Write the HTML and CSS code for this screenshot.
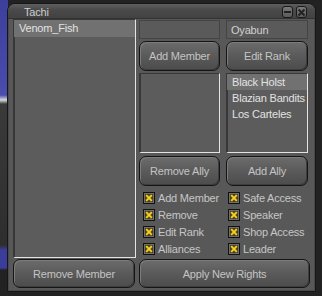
FILE: index.html
```html
<html lang="en">
  <head>
    <title>Tachi</title>
    <meta charset="utf-8">
    <meta name="viewport" content="width=device-width, initial-scale=1.0">
    <link rel="stylesheet" href="styles.css">
  </head>
  <body>
    <div class="scene">
      <div class="window">
        <div class="titlebar">
          <span class="title">Tachi</span>
          <div class="winbtns">
            <span class="winbtn">
              <svg width="11" height="12" viewBox="0 0 11 12"><rect x="2" y="5" width="7" height="2" fill="#222"/></svg>
            </span>
            <span class="winbtn">
              <svg width="11" height="12" viewBox="0 0 11 12"><path d="M2.5 3.5 L8.5 9.5 M8.5 3.5 L2.5 9.5" stroke="#222" stroke-width="2"/></svg>
            </span>
          </div>
        </div>

        <div class="content">
          <div class="main">
            <ul class="list list--members">
              <li class="item item--active">Venom_Fish</li>
            </ul>

            <div class="side">
              <div class="field"></div>
              <div class="field">Oyabun</div>

              <button class="btn">Add Member</button>
              <button class="btn">Edit Rank</button>

              <ul class="list list--small"></ul>
              <ul class="list list--small">
                <li class="item item--active">Black Holst</li>
                <li class="item">Blazian Bandits</li>
                <li class="item">Los Carteles</li>
              </ul>

              <button class="btn btn--low">Remove Ally</button>
              <button class="btn btn--low">Add Ally</button>

              <ul class="rights">
                <li class="right"><span class="check"></span>Add Member</li>
                <li class="right"><span class="check"></span>Safe Access</li>
                <li class="right"><span class="check"></span>Remove</li>
                <li class="right"><span class="check"></span>Speaker</li>
                <li class="right"><span class="check"></span>Edit Rank</li>
                <li class="right"><span class="check"></span>Shop Access</li>
                <li class="right"><span class="check"></span>Alliances</li>
                <li class="right"><span class="check"></span>Leader</li>
              </ul>
            </div>
          </div>

          <div class="actions">
            <button class="btn btn--remove">Remove Member</button>
            <button class="btn btn--apply">Apply New Rights</button>
          </div>
        </div>
      </div>
    </div>

    <script>
      // same tick box for every right
      const box = '<svg width="12" height="12" viewBox="0 0 12 12">' +
        '<rect x="0.5" y="0.5" width="11" height="11" fill="#3a3a3a" stroke="#111"/>' +
        '<rect x="1.5" y="1.5" width="9" height="9" fill="none" stroke="#707070"/>' +
        '<path d="M3 3 L9 9 M9 3 L3 9" stroke="#6a5200" stroke-width="3.4"/>' +
        '<path d="M3.2 3.2 L8.8 8.8 M8.8 3.2 L3.2 8.8" stroke="#f2d22a" stroke-width="1.8"/>' +
        '</svg>';
      document.querySelectorAll('.check').forEach((el) => {
        el.innerHTML = box;
      });
    </script>
  </body>
</html>
```

FILE: styles.css
```css
html, body {
  margin: 0;
  padding: 0;
}

body {
  width: 322px;
  height: 296px;
  overflow: hidden;
  background-color: #222;
  background-image:
    linear-gradient(to bottom, #3d3f9c 0, #4a4cae 95px, #d8d8d8 100px, #3a3a3a 104px, #2e2e2e 245px, #3b3d9a 250px, #3b3d9a 268px, transparent 270px);
  background-size: 8px 296px;
  background-repeat: no-repeat;
  font-family: "Liberation Sans", Arial, sans-serif;
  font-size: 11px;
  letter-spacing: -0.2px;
}

.scene {
  padding: 3px 0 0 7px;
}

.window {
  width: 307px;
  height: 287px;
  border: 1px solid #161616;
  border-radius: 8px 8px 0 0;
  background-color: #585858;
  box-shadow: inset 0 0 0 1px #4a4a4a;
  display: flex;
  flex-direction: column;
}

.titlebar {
  height: 14px;
  display: flex;
  align-items: center;
  justify-content: space-between;
  padding: 0 8px 0 16px;
  border-radius: 7px 7px 0 0;
  background: linear-gradient(#5e5e5e, #4a4a4a 40%, #424242);
  border-bottom: 1px solid #333;
}

.title {
  color: #cfcfcf;
  padding-top: 1px;
}

.winbtns {
  display: flex;
  gap: 3px;
  margin-top: 2px;
}

.winbtn {
  display: block;
  width: 11px;
  height: 12px;
  border: 1px solid #1a1a1a;
  border-radius: 3px;
  background: linear-gradient(#7a7a7a, #5a5a5a);
  box-sizing: border-box;
  overflow: hidden;
}

.winbtn svg {
  display: block;
  margin: -1px;
}

.content {
  padding: 0 0 0 5px;
}

.main {
  display: flex;
  gap: 3px;
}

ul {
  list-style-type: none;
  margin: 0;
  padding: 0;
}

.list {
  background-color: #5c5c5c;
  border-top: 1px solid #383838;
  border-left: 2px solid #383838;
  border-right: 1px solid #e4e4e4;
  border-bottom: 1px solid #e4e4e4;
  box-sizing: border-box;
}

.list--members {
  width: 123px;
  height: 239px;
}

.list--small {
  height: 80px;
  margin-top: 2px;
}

.item {
  height: 16px;
  line-height: 16px;
  padding-left: 4px;
  color: #e2e2e2;
  white-space: nowrap;
  overflow: hidden;
}

.item--active {
  background-color: #717171;
  margin-left: -1px;
  padding-left: 5px;
}

.list--members .item {
  height: 17px;
  line-height: 17px;
}

.side {
  width: 169px;
  display: grid;
  grid-template-columns: 81px 82px;
  column-gap: 6px;
  align-content: start;
  padding-top: 1px;
}

.field {
  height: 19px;
  line-height: 19px;
  border: 1px solid #444;
  background-color: #5a5a5a;
  box-sizing: border-box;
  padding-left: 4px;
  color: #d0d0d0;
}

.btn {
  height: 30px;
  margin-top: 2px;
  border: 1px solid #151515;
  border-radius: 7px;
  background: linear-gradient(#6c6c6c, #5a5a5a 50%, #4c4c4c);
  box-shadow: inset 1px 1px 0 #7c7c7c, inset -1px -1px 0 #3e3e3e;
  color: #c4c4c4;
  font-family: inherit;
  font-size: 11px;
  letter-spacing: -0.2px;
  padding: 0;
}

.btn--low {
  margin-top: 3px;
}

.rights {
  grid-column: 1 / 3;
  display: grid;
  grid-template-columns: 85px 84px;
  grid-auto-rows: 17px;
  margin-top: 3px;
}

.right {
  display: flex;
  align-items: center;
  gap: 3px;
  padding-left: 4px;
  color: #c6c6c6;
  white-space: nowrap;
}

.check {
  width: 12px;
  height: 12px;
}

.check svg {
  display: block;
}

.actions {
  display: flex;
  gap: 4px;
  margin-top: 1px;
}

.btn--remove {
  width: 122px;
  height: 29px;
  margin-top: 0;
}

.btn--apply {
  width: 171px;
  height: 29px;
  margin-top: 0;
}
```
